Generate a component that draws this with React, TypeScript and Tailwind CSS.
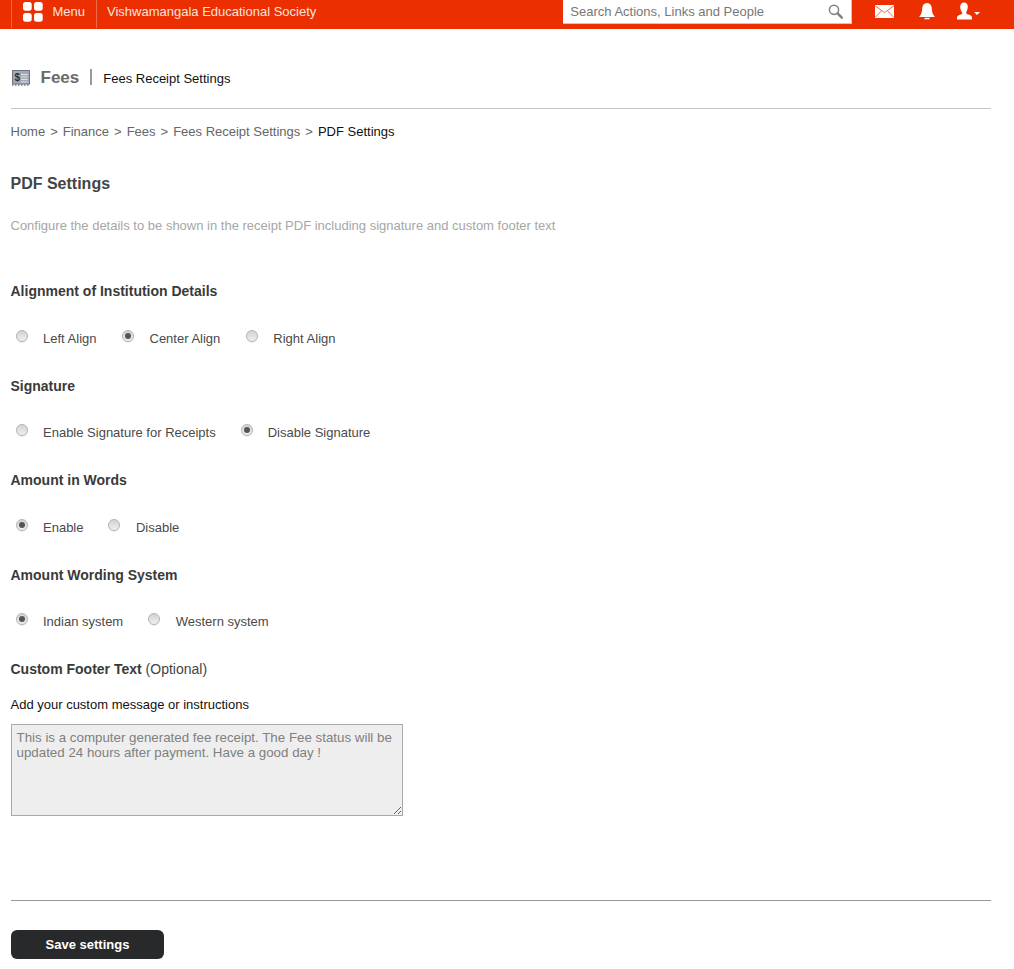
import React from "react";

function Radio({ label, checked, gap = "", textGap = "ml-[15px]" }: { label: string; checked?: boolean; gap?: string; textGap?: string }) {
  return (
    <label className={`flex items-start ${gap}`}>
      <span className="mt-[2px] flex h-[12px] w-[12px] shrink-0 items-center justify-center rounded-full border border-[#b4b4b4] bg-gradient-to-b from-[#d2d2d2] to-[#f0f0f0] shadow-[0_1px_1px_rgba(0,0,0,0.08)]">
        {checked && <span className="h-[6px] w-[6px] rounded-full bg-[#555]" />}
      </span>
      <span className={`${textGap} mt-[2px] text-[13px] leading-[18px] text-[#4a4a4a]`}>{label}</span>
    </label>
  );
}

function SectionTitle({ children, className = "" }: { children: React.ReactNode; className?: string }) {
  return <div className={`text-[14px] font-bold leading-[20px] text-[#3a3a3a] ${className}`}>{children}</div>;
}

function RadioRow({ children, className = "" }: { children: React.ReactNode; className?: string }) {
  return <div className={`flex pl-[5.5px] ${className}`}>{children}</div>;
}

export default function App() {
  return (
    <div className="h-[969px] overflow-hidden bg-white font-['Liberation_Sans',Arial,sans-serif]">
      <header className="flex h-[29px] items-stretch bg-[#eb2f00] text-[13px] text-white">
        <div className="ml-[11px] flex h-[28px] w-[86px] items-center border-x border-[#f2694a] pl-[11px]">
          <svg width="20" height="20" viewBox="0 0 20 20" fill="white" className="mb-[4px]">
            <rect x="0" y="0" width="8.7" height="8.7" rx="2.6" />
            <rect x="11" y="0" width="8.7" height="8.7" rx="2.6" />
            <rect x="0" y="11" width="8.7" height="8.7" rx="2.6" />
            <rect x="11" y="11" width="8.7" height="8.7" rx="2.6" />
          </svg>
          <span className="mb-[5px] ml-[9.5px] leading-[18px] text-[#fbe3dc]">Menu</span>
        </div>
        <div className="ml-[10px] mt-[3px] leading-[18px] text-[#fbe3dc]">Vishwamangala Educational Society</div>
        <div className="ml-[247px] flex h-[24px] w-[289px] items-center justify-between border-b border-r border-[#c9c9c9] bg-white pl-[7px] pr-[8px] text-[13px] text-[#777]">
          <span>Search Actions, Links and People</span>
          <svg width="15" height="15" viewBox="0 0 15 15" fill="none" stroke="#808080" className="mb-[1px]">
            <circle cx="6" cy="5.8" r="4.6" strokeWidth="1.5" />
            <path d="M9.6 9.4 L13.8 13.6" strokeWidth="2.4" strokeLinecap="round" />
          </svg>
        </div>
        <div className="ml-[23px] flex items-start">
          <svg width="19" height="13" viewBox="0 0 19 13" className="mt-[5px]">
            <rect x="0" y="0" width="19" height="13" fill="white" />
            <path d="M0 0.7 L9.5 7.6 L19 0.7 M0 12.5 L6.5 5.8 M19 12.5 L12.5 5.8" stroke="#eb6a4d" strokeWidth="1" fill="none" />
          </svg>
          <svg width="16" height="17" viewBox="0 0 16 17" fill="white" className="ml-[24.5px] mt-[3px]">
            <path d="M8 0 C11 0 12.6 2.2 12.8 5.5 C13 9 13.6 11.2 15.5 13.2 L15.5 14 L0.5 14 L0.5 13.2 C2.4 11.2 3 9 3.2 5.5 C3.4 2.2 5 0 8 0 Z" />
            <rect x="5.5" y="14.8" width="5" height="1.5" />
          </svg>
          <svg width="23" height="18" viewBox="0 0 23 18" fill="white" className="ml-[22.5px] mt-[2px]">
            <path d="M7 0.5 C9.4 0.5 10.8 2.2 10.8 4.6 C10.8 7 10 8.8 9.2 10.2 C9.1 11.4 9.8 12 11.4 12.6 C13.2 13.3 14.6 13.9 15 15.4 L15 17.4 L0 17.4 L0 15.4 C0.4 13.9 1.8 13.3 3.6 12.6 C5.2 12 5.9 11.4 4.8 10.2 C4 8.8 3.2 7 3.2 4.6 C3.2 2.2 4.6 0.5 7 0.5 Z" />
            <path d="M17 10 L23 10 L20 13 Z" />
          </svg>
        </div>
      </header>

      <main className="pl-[10.5px] pr-[23px]">
        <div className="flex h-[80px] items-end border-b border-[#c4c4c4] pb-[20px]">
          <svg width="18" height="16" viewBox="0 0 18 16" className="mb-[2px] ml-[1px]">
            <rect x="0.5" y="0.5" width="17" height="13.5" fill="#a3aab5" stroke="#6d7682" />
            <text x="2.5" y="11" fontSize="10" fontWeight="700" fill="#2a323e" fontFamily="Liberation Sans">$</text>
            <path d="M9 4.5h6.5M9 7h6.5M9 9.5h6.5M9 12h6.5" stroke="#dfe3e8" strokeWidth="1" />
            <path d="M0 15h18" stroke="#6f7785" strokeWidth="1.4" strokeDasharray="1.5 1.5" />
          </svg>
          <span className="ml-[11px] text-[17px] font-bold leading-[20px] text-[#6b6b6b]">Fees</span>
          <span className="mb-[3px] ml-[10.75px] h-[16px] w-[1.5px] bg-[#999]" />
          <span className="ml-[11.75px] text-[13px] leading-[18px] text-[#111]">Fees Receipt Settings</span>
        </div>

        <nav className="mt-[14px] flex text-[13px] leading-[18px] text-[#666]">
          <span>Home</span>
          <span className="mx-[5px]">&gt;</span>
          <span>Finance</span>
          <span className="mx-[5px]">&gt;</span>
          <span>Fees</span>
          <span className="mx-[5px]">&gt;</span>
          <span>Fees Receipt Settings</span>
          <span className="mx-[5px]">&gt;</span>
          <span className="text-[#111]">PDF Settings</span>
        </nav>

        <h1 className="mt-[33px] text-[16px] font-bold leading-[20px] text-[#444]">PDF Settings</h1>
        <p className="mt-[23px] text-[13px] leading-[18px] text-[#a6a6a6]">
          Configure the details to be shown in the receipt PDF including signature and custom footer text
        </p>

        <SectionTitle className="mt-[46px]">Alignment of Institution Details</SectionTitle>
        <RadioRow className="mt-[27px]">
          <Radio label="Left Align" />
          <Radio label="Center Align" gap="ml-[25px]" textGap="ml-[16px]" checked />
          <Radio label="Right Align" gap="ml-[25.5px]" textGap="ml-[15.5px]" />
        </RadioRow>

        <SectionTitle className="mt-[28px]">Signature</SectionTitle>
        <RadioRow className="mt-[26px]">
          <Radio label="Enable Signature for Receipts" />
          <Radio label="Disable Signature" gap="ml-[25px]" checked />
        </RadioRow>

        <SectionTitle className="mt-[28px]">Amount in Words</SectionTitle>
        <RadioRow className="mt-[27px]">
          <Radio label="Enable" checked />
          <Radio label="Disable" gap="ml-[25px]" textGap="ml-[15.5px]" />
        </RadioRow>

        <SectionTitle className="mt-[28px]">Amount Wording System</SectionTitle>
        <RadioRow className="mt-[26px]">
          <Radio label="Indian system" checked />
          <Radio label="Western system" gap="ml-[25px]" textGap="ml-[15.5px]" />
        </RadioRow>

        <div className="mt-[28px] text-[14px] leading-[20px] text-[#3a3a3a]">
          <span className="font-bold">Custom Footer Text</span> <span className="text-[#444]">(Optional)</span>
        </div>
        <div className="mt-[17px] text-[13px] leading-[18px] text-[#111]">Add your custom message or instructions</div>
        <textarea
          disabled
          className="mt-[10px] block h-[92px] w-[392px] resize border border-[#a9a9a9] bg-[#eeeeee] px-[5px] py-[5px] text-[13.33px] leading-[15px] text-[#808080]"
          defaultValue="This is a computer generated fee receipt. The Fee status will be updated 24 hours after payment. Have a good day !"
        />
        <hr className="mt-[84px] border-t border-[#999]" />
        <button className="mt-[29px] block h-[29px] w-[153px] rounded-[6px] bg-[#28292b] pl-[1px] text-[13px] font-bold text-white">
          Save settings
        </button>
      </main>
    </div>
  );
}
